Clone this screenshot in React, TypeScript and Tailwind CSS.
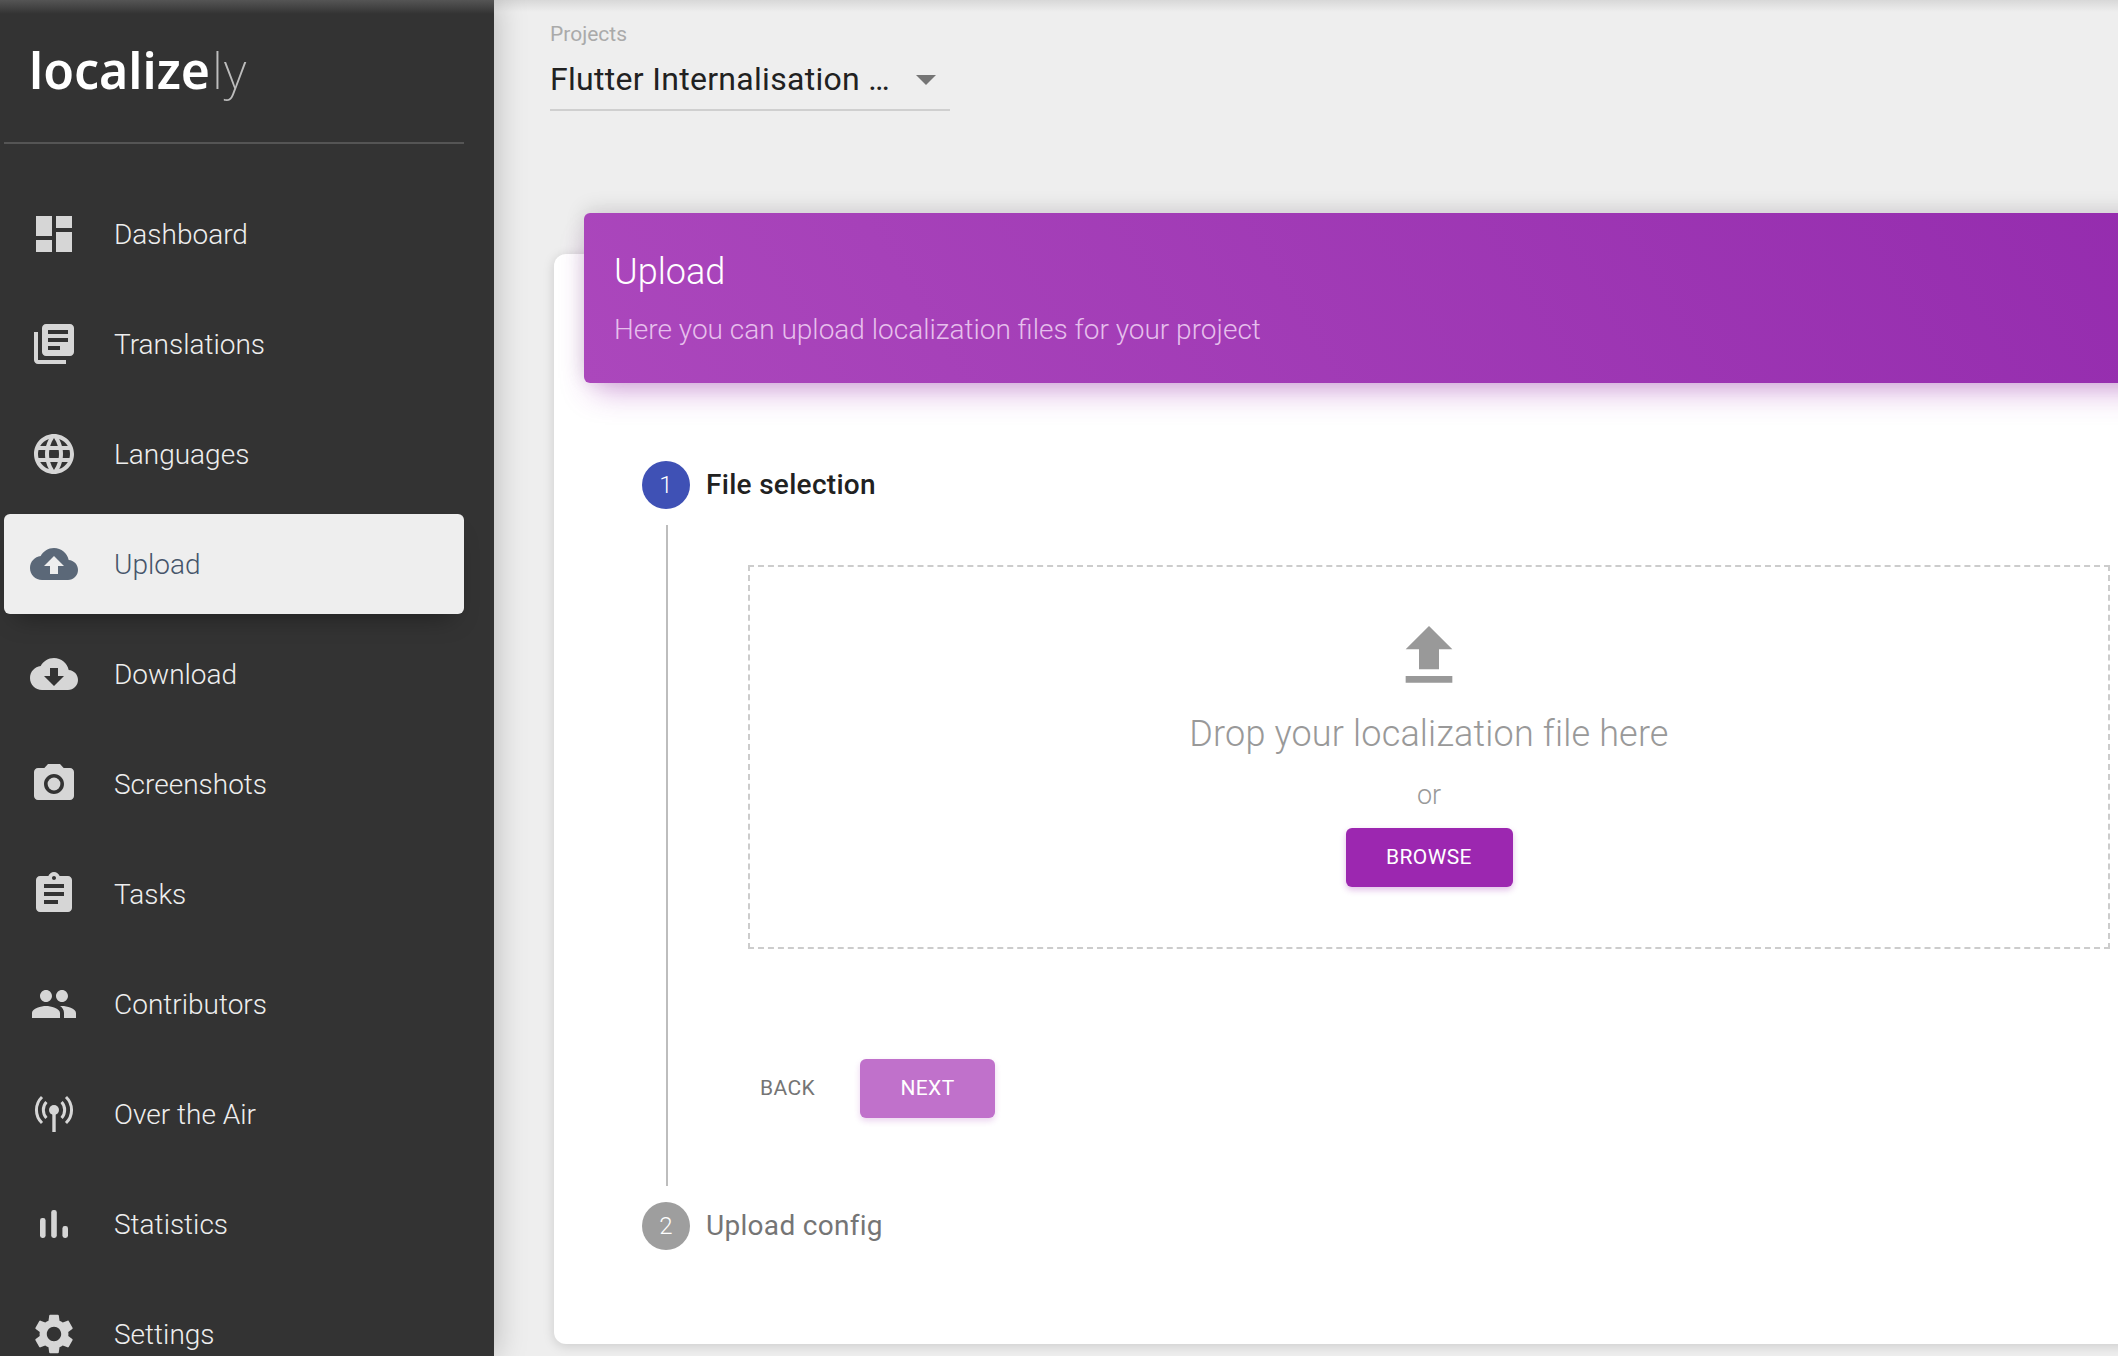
const navItems = [
  { label: 'Dashboard', icon: <path d="M3 13h8V3H3v10zm0 8h8v-6H3v6zm10 0h8V11h-8v10zm0-18v6h8V3h-8z" /> },
  { label: 'Translations', icon: <path d="M4 6H2v14c0 1.1.9 2 2 2h14v-2H4V6zm16-4H8c-1.1 0-2 .9-2 2v12c0 1.1.9 2 2 2h12c1.1 0 2-.9 2-2V4c0-1.1-.9-2-2-2zm-1 9H9V9h10v2zm-4 4H9v-2h6v2zm4-8H9V5h10v2z" /> },
  { label: 'Languages', icon: <path d="M11.99 2C6.47 2 2 6.48 2 12s4.47 10 9.99 10C17.52 22 22 17.52 22 12S17.52 2 11.99 2zm6.93 6h-2.95c-.32-1.25-.78-2.45-1.38-3.56 1.84.63 3.37 1.91 4.33 3.56zM12 4.04c.83 1.2 1.48 2.53 1.91 3.96h-3.82c.43-1.43 1.08-2.76 1.91-3.96zM4.26 14C4.1 13.36 4 12.69 4 12s.1-1.36.26-2h3.38c-.08.66-.14 1.32-.14 2 0 .68.06 1.34.14 2H4.26zm.82 2h2.95c.32 1.25.78 2.45 1.38 3.56-1.84-.63-3.37-1.9-4.33-3.56zm2.95-8H5.08c.96-1.66 2.49-2.93 4.33-3.56C8.81 5.55 8.35 6.75 8.03 8zM12 19.96c-.83-1.2-1.48-2.53-1.91-3.96h3.82c-.43 1.43-1.08 2.76-1.91 3.96zM14.34 14H9.66c-.09-.66-.16-1.32-.16-2 0-.68.07-1.35.16-2h4.68c.09.65.16 1.32.16 2 0 .68-.07 1.34-.16 2zm.25 5.56c.6-1.11 1.06-2.31 1.38-3.56h2.95c-.96 1.65-2.49 2.93-4.33 3.56zM16.36 14c.08-.66.14-1.32.14-2 0-.68-.06-1.34-.14-2h3.38c.16.64.26 1.31.26 2s-.1 1.36-.26 2h-3.38z" /> },
  { label: 'Upload', active: true, icon: <path d="M19.35 10.04C18.67 6.59 15.64 4 12 4 9.11 4 6.6 5.64 5.35 8.04 2.34 8.36 0 10.91 0 14c0 3.31 2.69 6 6 6h13c2.76 0 5-2.24 5-5 0-2.64-2.05-4.78-4.65-4.96zM14 13v4h-4v-4H7l5-5 5 5h-3z" /> },
  { label: 'Download', icon: <path d="M19.35 10.04C18.67 6.59 15.64 4 12 4 9.11 4 6.6 5.64 5.35 8.04 2.34 8.36 0 10.91 0 14c0 3.31 2.69 6 6 6h13c2.76 0 5-2.24 5-5 0-2.64-2.05-4.78-4.65-4.96zM17 13l-5 5-5-5h3V9h4v4h3z" /> },
  {
    label: 'Screenshots',
    icon: (
      <>
        <circle cx="12" cy="12" r="3.2" />
        <path d="M9 2L7.17 4H4c-1.1 0-2 .9-2 2v12c0 1.1.9 2 2 2h16c1.1 0 2-.9 2-2V6c0-1.1-.9-2-2-2h-3.17L15 2H9zm3 15c-2.76 0-5-2.24-5-5s2.24-5 5-5 5 2.24 5 5-2.24 5-5 5z" />
      </>
    ),
  },
  { label: 'Tasks', icon: <path d="M19 3h-4.18C14.4 1.84 13.3 1 12 1c-1.3 0-2.4.84-2.82 2H5c-1.1 0-2 .9-2 2v14c0 1.1.9 2 2 2h14c1.1 0 2-.9 2-2V5c0-1.1-.9-2-2-2zm-7 0c.55 0 1 .45 1 1s-.45 1-1 1-1-.45-1-1 .45-1 1-1zm2 14H7v-2h7v2zm3-4H7v-2h10v2zm0-4H7V7h10v2z" /> },
  { label: 'Contributors', icon: <path d="M16 11c1.66 0 2.99-1.34 2.99-3S17.66 5 16 5c-1.66 0-3 1.34-3 3s1.34 3 3 3zm-8 0c1.66 0 2.99-1.34 2.99-3S9.66 5 8 5C6.34 5 5 6.34 5 8s1.34 3 3 3zm0 2c-2.33 0-7 1.17-7 3.5V19h14v-2.5c0-2.33-4.67-3.5-7-3.5zm8 0c-.29 0-.62.02-.97.05 1.16.84 1.97 1.97 1.97 3.45V19h6v-2.5c0-2.33-4.67-3.5-7-3.5z" /> },
  {
    label: 'Over the Air',
    icon: (
      <>
        <circle cx="12" cy="10" r="2.5" />
        <rect x="11.15" y="11" width="1.7" height="10" />
        <path d="M6 3.5A9 9 0 0 0 6 16.5M18 3.5A9 9 0 0 1 18 16.5M8.2 6A6 6 0 0 0 8.2 14M15.8 6A6 6 0 0 1 15.8 14" fill="none" stroke="currentColor" strokeWidth="1.5" />
      </>
    ),
  },
  {
    label: 'Statistics',
    icon: (
      <>
        <rect x="5" y="9" width="2.8" height="10" rx="1.2" />
        <rect x="10.6" y="5" width="2.8" height="14" rx="1.2" />
        <rect x="16.2" y="13" width="2.8" height="6" rx="1.2" />
      </>
    ),
  },
  { label: 'Settings', icon: <path d="M19.14 12.94c.04-.3.06-.61.06-.94 0-.32-.02-.64-.07-.94l2.03-1.58c.18-.14.23-.41.12-.61l-1.92-3.32c-.12-.22-.37-.29-.59-.22l-2.39.96c-.5-.38-1.03-.7-1.62-.94l-.36-2.54c-.04-.24-.24-.41-.48-.41h-3.84c-.24 0-.43.17-.47.41l-.36 2.54c-.59.24-1.13.57-1.62.94l-2.39-.96c-.22-.08-.47 0-.59.22L2.74 8.87c-.12.21-.08.47.12.61l2.03 1.58c-.05.3-.09.63-.09.94s.02.64.07.94l-2.03 1.58c-.18.14-.23.41-.12.61l1.92 3.32c.12.22.37.29.59.22l2.39-.96c.5.38 1.03.7 1.62.94l.36 2.54c.05.24.24.41.48.41h3.84c.24 0 .44-.17.47-.41l.36-2.54c.59-.24 1.13-.56 1.62-.94l2.39.96c.22.08.47 0 .59-.22l1.92-3.32c.12-.22.07-.47-.12-.61l-2.01-1.58zM12 15.6c-1.98 0-3.6-1.62-3.6-3.6s1.62-3.6 3.6-3.6 3.6 1.62 3.6 3.6-1.62 3.6-3.6 3.6z" /> },
];

function Sidebar() {
  return (
    <aside className="relative z-20 flex h-full w-[494px] shrink-0 flex-col overflow-hidden bg-[linear-gradient(#555_0px,#333_14px)] shadow-[0_0_30px_rgba(0,0,0,0.25)]">
      <div className="flex h-[142px] shrink-0 items-start pl-[29px] pt-[36px] font-['Noto_Sans',sans-serif] text-[50px] leading-[68px] text-white">
        <span className="font-semibold">localize</span>
        <span className="ml-[2px] font-extralight tracking-[1px] text-[#bdbdbd]">ly</span>
      </div>
      <div className="mx-[4px] h-[2px] w-[460px] shrink-0 bg-[#555]" />
      <nav className="mt-[40px] flex shrink-0 flex-col gap-[10px]">
        {navItems.map((item) => (
          <div
            key={item.label}
            className={`mx-[4px] flex h-[100px] w-[460px] shrink-0 items-center rounded-[6px] ${
              item.active ? 'bg-[#eeeeee] text-[#5b6878] shadow-[0_14px_26px_-12px_rgba(0,0,0,0.4)]' : 'text-[#d6d6d6]'
            }`}
          >
            <svg viewBox="0 0 24 24" fill="currentColor" className="ml-[26px] h-[48px] w-[48px] shrink-0">
              {item.icon}
            </svg>
            <span
              className={`ml-[36px] pt-[2px] text-[28px] font-light ${item.active ? 'text-[#46556a]' : 'text-[#eeeeee]'}`}
            >
              {item.label}
            </span>
          </div>
        ))}
      </nav>
    </aside>
  );
}

function StepDot({ n, active }: { n: number; active?: boolean }) {
  return (
    <div
      className={`flex h-[48px] w-[48px] shrink-0 items-center justify-center rounded-full text-[24px] font-light text-white ${
        active ? 'bg-[#3f51b5]' : 'bg-[#9e9e9e]'
      }`}
    >
      {n}
    </div>
  );
}

function Dropzone() {
  return (
    <div className="ml-[80px] flex h-[384px] w-[1362px] flex-col items-center border-2 border-dashed border-[#cccccc]">
      <svg viewBox="0 0 24 24" fill="#999999" className="mt-[49px] h-[80px] w-[80px] shrink-0">
        <path d="M9 16h6v-6h4l-7-7-7 7h4zm-4 2h14v2H5z" />
      </svg>
      <div className="mt-[10px] text-[36px] leading-[56px] font-light tracking-[0.17px] text-[#999999]">
        Drop your localization file here
      </div>
      <div className="mt-[15px] text-[27px] leading-[36px] font-light text-[#999999]">or</div>
      <button className="mt-[15px] h-[59px] w-[167px] rounded-[6px] bg-[#9c27b0] text-[21px] font-normal tracking-[0.4px] text-white shadow-[0_3px_6px_rgba(156,39,176,0.3)]">
        BROWSE
      </button>
    </div>
  );
}

function Stepper() {
  return (
    <div className="ml-[88px] mt-[78px] flex flex-col">
      <div className="flex items-center">
        <StepDot n={1} active />
        <span className="ml-[16px] text-[28px] font-medium tracking-[0.3px] text-[#212121]">File selection</span>
      </div>
      <div className="ml-[24px] mt-[16px] h-[661px] border-l-2 border-[#bdbdbd] pt-[40px]">
        <Dropzone />
        <div className="ml-[80px] mt-[110px] flex items-center">
          <button className="h-[59px] w-[79px] text-[21px] tracking-[0.4px] text-[#757575]">BACK</button>
          <button className="ml-[33px] h-[59px] w-[135px] rounded-[6px] bg-[#c071cb] text-[21px] tracking-[0.4px] text-white shadow-[0_3px_6px_rgba(156,39,176,0.2)]">
            NEXT
          </button>
        </div>
      </div>
      <div className="mt-[16px] flex items-center">
        <StepDot n={2} />
        <span className="ml-[16px] text-[28px] tracking-[0.3px] text-[#757575]">Upload config</span>
      </div>
    </div>
  );
}

export default function App() {
  return (
    <div className="flex h-[1356px] w-[2118px] overflow-hidden bg-[#eeeeee] font-['Roboto',sans-serif]">
      <Sidebar />
      <main className="relative min-w-0 flex-1 bg-[linear-gradient(#d8d8d8_0px,#eeeeee_12px)]">
        <div className="ml-[56px] flex w-[400px] flex-col border-b-2 border-[#cfcfcf] pb-[9px] pt-[22px]">
          <span className="text-[21px] leading-[24px] text-[#aaaaaa]">Projects</span>
          <div className="mt-[12px] flex items-center">
            <span className="w-[366px] text-[32px] leading-[42px] tracking-[0.3px] text-[#212121]">Flutter Internalisation …</span>
            <span className="mt-[2px] h-0 w-0 border-x-[10.5px] border-t-[10.5px] border-x-transparent border-t-[#757575]" />
          </div>
        </div>
        <section className="ml-[60px] mt-[143px] flow-root h-[1090px] w-[1700px] rounded-[12px] bg-white shadow-[0_2px_12px_rgba(0,0,0,0.15)]">
          <div className="relative ml-[30px] -mt-[41px] h-[170px] w-[1640px] rounded-[6px] bg-[linear-gradient(60deg,#ab47bc,#8e24aa_125%)] pl-[30px] pt-[35px] shadow-[0_16px_30px_-10px_rgba(156,39,176,0.45),0_-4px_20px_rgba(0,0,0,0.12)]">
            <div className="text-[36px] leading-[48px] font-light text-white">Upload</div>
            <div className="mt-[15px] text-[28px] leading-[38px] font-light text-[#e6bfec]">
              Here you can upload localization files for your project
            </div>
          </div>
          <Stepper />
        </section>
      </main>
    </div>
  );
}
